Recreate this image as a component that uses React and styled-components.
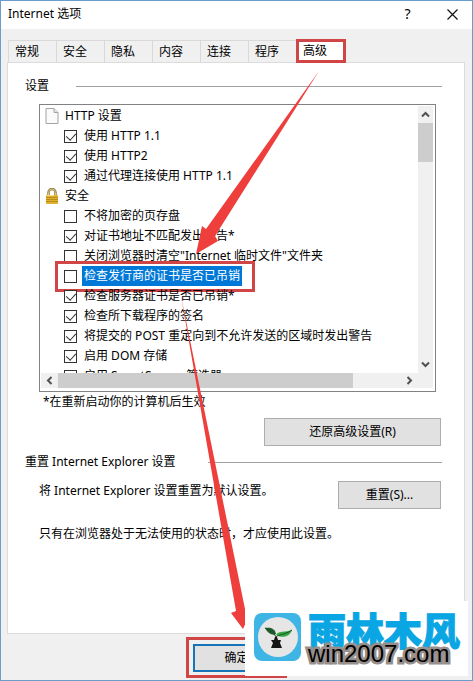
import styled, { createGlobalStyle } from 'styled-components';

const tabs = ['常规', '安全', '隐私', '内容', '连接', '程序', '高级'];

const httpOptions = [
    { label: '使用 HTTP 1.1', checked: true },
    { label: '使用 HTTP2', checked: true },
    { label: '通过代理连接使用 HTTP 1.1', checked: true },
];

const securityOptions = [
    { label: '不将加密的页存盘' },
    { label: '对证书地址不匹配发出警告*', checked: true },
    { label: '关闭浏览器时清空"Internet 临时文件"文件夹' },
    { label: '检查发行商的证书是否已吊销', selected: true },
    { label: '检查服务器证书是否已吊销*', checked: true },
    { label: '检查所下载程序的签名', checked: true },
    { label: '将提交的 POST 重定向到不允许发送的区域时发出警告', checked: true },
    { label: '启用 DOM 存储', checked: true },
    { label: '启用 SmartScreen 筛选器', checked: true },
];

const Chevron = ({ turn = 0 }) => (
    <svg width="9" height="9" viewBox="0 0 9 9">
        <path d="M1 6.5L4.5 3L8 6.5" fill="none" stroke="#505050" strokeWidth="2" transform={`rotate(${turn} 4.5 4.5)`} />
    </svg>
);

const PageIcon = () => (
    <svg width="14" height="16" viewBox="0 0 14 16">
        <path d="M1 .5H9L13 4.5V15.5H1Z" fill="#fbfbfb" stroke="#a3a3a3" />
        <path d="M9 .5V4.5H13" fill="#e4e4e4" stroke="#a3a3a3" />
    </svg>
);

const LockIcon = () => (
    <svg width="14" height="16" viewBox="0 0 14 16">
        <path d="M3.5 8V4.5A3.5 3.5 0 0 1 10.5 4.5V8" fill="none" stroke="#8c7433" strokeWidth="2.4" />
        <path d="M3.5 8V4.5A3.5 3.5 0 0 1 10.5 4.5V8" fill="none" stroke="#d8c68d" />
        <rect x="1" y="7" width="12" height="9" rx="1" fill="#e0b22c" />
        <path d="M1 9.5H13M1 11.5H13M1 13.5H13" stroke="#b98c20" />
        <path d="M2 7.5H9" stroke="#f6dc80" />
    </svg>
);

const Option = ({ label, checked, selected }) => (
    <OptionRow>
        <Checkbox type="checkbox" defaultChecked={checked} />
        <OptionText $selected={selected}>{label}</OptionText>
        {selected && <RowMarker />}
    </OptionRow>
);

const App = () => {
    return (
        <>
            <GlobalStyle />
            <Window>
                <TitleBar>
                    <Title>Internet 选项</Title>
                    <TitleButton aria-label="帮助">?</TitleButton>
                    <TitleButton aria-label="关闭">
                        <svg width="11" height="11" viewBox="0 0 11 11">
                            <path d="M.5 .5L10.5 10.5M10.5 .5L.5 10.5" stroke="#111" strokeWidth="1.2" />
                        </svg>
                    </TitleButton>
                </TitleBar>
                <Body>
                    <TabBar>
                        {tabs.map((tab) => (
                            <Tab key={tab} $active={tab === '高级'}>{tab}</Tab>
                        ))}
                    </TabBar>
                    <Panel>
                        <GroupHeader $gap={27}>设置</GroupHeader>
                        <ListBox>
                            <Options>
                                <Category><PageIcon />HTTP 设置</Category>
                                {httpOptions.map((option) => <Option key={option.label} {...option} />)}
                                <Category><LockIcon />安全</Category>
                                {securityOptions.map((option) => <Option key={option.label} {...option} />)}
                            </Options>
                            <VerticalBar>
                                <ScrollButton aria-label="向上"><Chevron /></ScrollButton>
                                <VerticalThumb />
                                <ScrollButton aria-label="向下"><Chevron turn={180} /></ScrollButton>
                            </VerticalBar>
                            <HorizontalBar>
                                <ScrollButton aria-label="向左"><Chevron turn={-90} /></ScrollButton>
                                <HorizontalThumb />
                                <ScrollButton aria-label="向右"><Chevron turn={90} /></ScrollButton>
                            </HorizontalBar>
                            <Corner />
                        </ListBox>
                        <Note>*在重新启动你的计算机后生效</Note>
                        <RestoreButton>还原高级设置(R)</RestoreButton>
                        <GroupHeader $gap={32}>重置 Internet Explorer 设置</GroupHeader>
                        <ResetRow>
                            <span>将 Internet Explorer 设置重置为默认设置。</span>
                            <ResetButton>重置(S)...</ResetButton>
                        </ResetRow>
                        <Hint>只有在浏览器处于无法使用的状态时，才应使用此设置。</Hint>
                    </Panel>
                    <Footer>
                        <OkMarker>
                            <OkButton>确定</OkButton>
                        </OkMarker>
                    </Footer>
                </Body>
                <Arrows width="473" height="681" viewBox="0 0 473 681">
                    <path d="M319 71L206 229L202 226L196 254L218 241L215 236Z" />
                    <path d="M181 296L236 611L231 613L243 629L252 609L245 609Z" />
                </Arrows>
                <Watermark>
                    <svg width="48" height="48" viewBox="0 0 48 48">
                        <rect width="47" height="48" rx="8" fill="#3fb5e6" />
                        <circle cx="24" cy="24" r="20" fill="#e6e6e6" />
                        <path d="M11 15C16 14 21 15 22 21C19 23 14 21 11 15Z" fill="#1f5f2c" />
                        <path d="M22 22C25 17 31 20 38 17C36 23 30 26 22 22Z" fill="#35a845" />
                        <path d="M11 15C15 17 19 18 22 24C25 21 31 22 38 17" fill="none" stroke="#174f22" />
                        <path d="M21 24H23L24 27H27L26 30L28 35H17L19 30L17 27H20Z" fill="#151515" />
                    </svg>
                    <Brand>
                        <BrandName>雨林木风</BrandName>
                        <BrandSite>win2007.com</BrandSite>
                    </Brand>
                </Watermark>
            </Window>
        </>
    );
};

const GlobalStyle = createGlobalStyle`
    * {
        box-sizing: border-box;
    }

    body {
        margin: 0;
    }

    body, button {
        font-family: "Noto Sans", "Noto Sans CJK SC", sans-serif;
        font-size: 12px;
        line-height: 20px;
        color: #000;
    }

    svg {
        flex-shrink: 0;
    }
`;

const Window = styled.div`
    position: relative;
    display: flex;
    flex-direction: column;
    min-height: 100vh;
    overflow: hidden;
    border: 1px solid #6c9ccb;
    background-color: #f0f0f0;
`;

const TitleBar = styled.header`
    display: flex;
    align-items: center;
    height: 28px;
    padding: 0 8px 2px 7px;
    background-color: #fff;
`;

const Title = styled.div`
    flex: 1;
`;

const TitleButton = styled.button`
    display: flex;
    justify-content: center;
    align-items: center;
    width: 23px;
    height: 24px;
    margin-left: 22px;
    padding: 0;
    border: none;
    background: none;
    font-size: 14px;
`;

const Body = styled.main`
    flex: 1;
    display: flex;
    flex-direction: column;
    padding: 11px 7px 0 6px;
`;

const TabBar = styled.nav`
    display: flex;
    height: 22px;
    padding-left: 1px;
`;

const Tab = styled.button`
    width: ${({ $active }) => ($active ? '50px' : '48px')};
    height: ${({ $active }) => ($active ? '24px' : '22px')};
    margin-top: ${({ $active }) => ($active ? '-1px' : '0')};
    padding: 0 12px 0 6px;
    border: 1px solid #d9d9d9;
    border-width: 1px 0 0 1px;
    background-color: #f0f0f0;
    text-align: left;
    white-space: nowrap;

    ${({ $active }) => $active && `
        position: relative;
        z-index: 1;
        padding-left: 4px;
        border: 3px solid #d04545;
        background-color: #fff;
        line-height: 16px;
    `}
`;

const Panel = styled.section`
    flex: 1;
    display: flex;
    flex-direction: column;
    padding: 13px 22px 0 17px;
    border: 1px solid #dcdcdc;
    background-color: #fff;
`;

const GroupHeader = styled.div`
    display: flex;
    align-items: center;
    gap: ${({ $gap }) => $gap}px;

    &::after {
        content: '';
        flex: 1;
        height: 1px;
        background-color: #a0a0a0;
    }
`;

const ListBox = styled.div`
    display: grid;
    grid-template-columns: 1fr 15px;
    grid-template-rows: 267px 15px;
    margin: 8px 6px 0 14px;
    padding: 1px 2px 3px 1px;
    border: 1px solid #828282;
`;

const Options = styled.div`
    min-width: 0;
    overflow: hidden;
    padding-left: 4px;
    white-space: nowrap;
`;

const Category = styled.div`
    display: flex;
    align-items: center;
    gap: 6px;
    height: 20px;
`;

const OptionRow = styled.label`
    position: relative;
    display: flex;
    align-items: center;
    gap: 5px;
    height: 20px;
    padding-left: 19px;
`;

const Checkbox = styled.input`
    position: relative;
    appearance: none;
    flex-shrink: 0;
    width: 13px;
    height: 13px;
    margin: 0;
    border: 1px solid #333;
    background-color: #fff;

    &:checked::after {
        content: '';
        position: absolute;
        left: 3px;
        top: 0;
        width: 5px;
        height: 8px;
        border: solid #333;
        border-width: 0 1px 1px 0;
        transform: rotate(42deg);
    }
`;

const OptionText = styled.span`
    padding: 0 2px;
    color: ${({ $selected }) => ($selected ? '#fff' : '#000')};
    background-color: ${({ $selected }) => ($selected ? '#0078d7' : 'transparent')};
`;

const RowMarker = styled.span`
    position: absolute;
    left: 10px;
    top: -5px;
    width: 200px;
    height: 31px;
    border: 3px solid #d04545;
`;

const VerticalBar = styled.div`
    display: grid;
    grid-template-rows: 17px 1fr 17px;
    background-color: #f0f0f0;
`;

const HorizontalBar = styled.div`
    display: grid;
    grid-template-columns: 17px 1fr 17px;
    background-color: #f0f0f0;
`;

const ScrollButton = styled.button`
    display: flex;
    justify-content: center;
    align-items: center;
    padding: 0;
    border: none;
    background: none;
`;

const VerticalThumb = styled.div`
    height: 39px;
    background-color: #cdcdcd;
`;

const HorizontalThumb = styled.div`
    width: 86%;
    background-color: #cdcdcd;
`;

const Corner = styled.div`
    background-color: #f0f0f0;
`;

const Note = styled.div`
    padding-left: 18px;
`;

const Button = styled.button`
    height: 28px;
    padding: 0;
    border: 1px solid #adadad;
    background-color: #e1e1e1;
`;

const RestoreButton = styled(Button)`
    align-self: flex-end;
    width: 177px;
    margin: 6px 1px 6px 0;
`;

const ResetRow = styled.div`
    display: flex;
    justify-content: space-between;
    margin-top: 9px;
    padding: 0 1px 0 14px;
`;

const ResetButton = styled(Button)`
    width: 103px;
`;

const Hint = styled.div`
    margin-top: 15px;
    padding-left: 14px;
`;

const Footer = styled.footer`
    height: 46px;
    padding: 3px 0 0 179px;
`;

const OkMarker = styled.div`
    width: 101px;
    height: 41px;
    padding: 4px;
    border: 3px solid #d04545;
`;

const OkButton = styled(Button)`
    width: 87px;
    border: 2px solid #1874b8;
`;

const Arrows = styled.svg`
    position: absolute;
    left: -1px;
    top: -1px;
    fill: #ee3f3c;
    pointer-events: none;
`;

const Watermark = styled.div`
    position: absolute;
    right: 4px;
    bottom: 4px;
    display: flex;
    gap: 6px;
    width: 223px;
    height: 75px;
    padding: 12px 0 0 9px;
    background-color: #fff;
`;

const Brand = styled.div`
    white-space: nowrap;
`;

const BrandName = styled.div`
    color: #0aa5e3;
    font-family: "Noto Sans CJK SC", sans-serif;
    font-size: 38px;
    font-weight: 900;
    line-height: 32px;
    -webkit-text-stroke: 1px #0aa5e3;
`;

const BrandSite = styled.div`
    position: relative;
    margin-top: -5px;
    color: #000;
    font-family: "Liberation Sans", sans-serif;
    font-size: 24px;
    line-height: 28px;
    -webkit-text-stroke: 5px #978f8c;
    paint-order: stroke fill;
`;

export default App;
